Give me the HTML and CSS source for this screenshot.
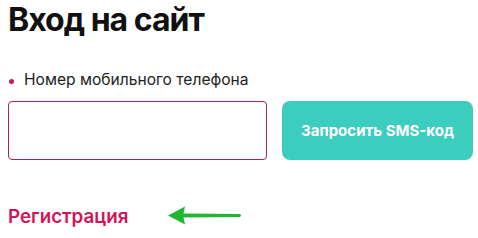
FILE: index.html
```html
<!DOCTYPE html>
<html lang="ru">
<head>
    <meta charset="UTF-8">
    <title>Вход на сайт</title>
    <link rel="stylesheet" href="styles.css">
</head>
<body>
    <div class="login">
        <h1 class="title">Вход на сайт</h1>
        <form class="form">
            <label class="label" for="phone"><span class="dot"></span>Номер мобильного телефона</label>
            <div class="row">
                <input type="tel" id="phone" class="phone">
                <button type="button" class="sms">Запросить SMS-код</button>
            </div>
        </form>
        <div class="reg">
            <a href="#" class="reg-link">Регистрация</a>
            <svg class="arrow" width="74" height="20" viewBox="0 0 74 20">
                <path d="M0 9.5 L17 0.5 L15.5 7.5 L72 8 Q74 9.5 72 11 L15.5 11.5 L17 18.5 Z" fill="#22b531"/>
            </svg>
        </div>
    </div>
</body>
</html>
```

FILE: styles.css
```css
html, body {
    margin: 0;
    background: #fff;
}
body {
    font-family: Inter, "Noto Sans", sans-serif;
    color: #1a1a1a;
}
.login {
    padding: 0 0 0 8px;
}
.title {
    margin: 0;
    padding-top: 1px;
    font-size: 32px;
    line-height: 38px;
    font-weight: 700;
    color: #111;
    letter-spacing: -1px;
}
.form {
    margin-top: 31px;
}
.label {
    display: flex;
    align-items: center;
    font-size: 15.6px;
    line-height: 20px;
    color: #222;
}
.dot {
    width: 5px;
    height: 5px;
    border-radius: 50%;
    background: #d4145a;
    margin: 2px 10px 0 1px;
}
.row {
    display: flex;
    gap: 15px;
    margin-top: 11px;
}
.phone {
    flex: 0 0 259px;
    height: 59px;
    box-sizing: border-box;
    border: 1px solid #a3245c;
    border-radius: 4px;
    outline: 0;
    padding: 0 12px;
    font-size: 16px;
}
.sms {
    flex: 0 0 191px;
    height: 59px;
    border: none;
    border-radius: 8px;
    background: #3ccdbf;
    color: #fff;
    font-family: Inter, "Noto Sans", sans-serif;
    font-size: 15px;
    font-weight: 700;
    cursor: pointer;
}
.reg {
    display: flex;
    align-items: center;
    gap: 40px;
    margin-top: 45px;
}
.reg-link {
    color: #d4145a;
    text-decoration: none;
    font-size: 18.8px;
    font-weight: 600;
}
.arrow {
    display: block;
    margin-top: -2px;
}
```
